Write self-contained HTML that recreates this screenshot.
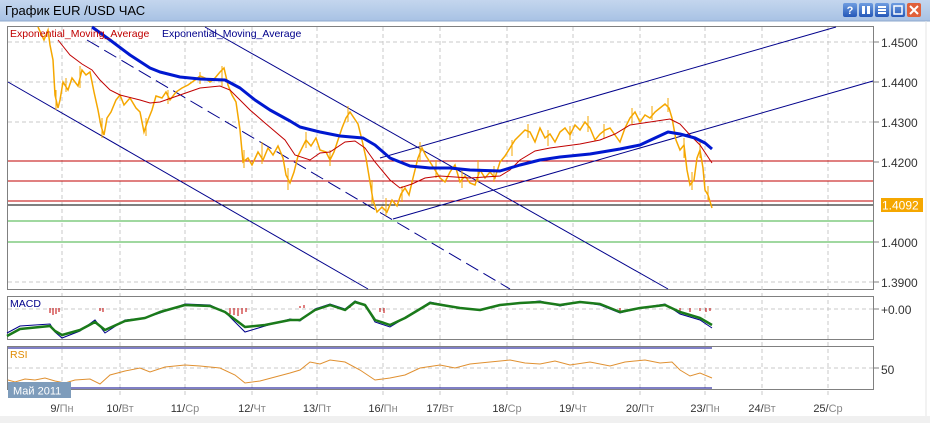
<!DOCTYPE html>
<html><head><meta charset="utf-8"><style>
html,body{margin:0;padding:0;width:930px;height:423px;overflow:hidden;background:#fff;font-family:"Liberation Sans",sans-serif}
</style></head><body>
<svg width="930" height="423" xmlns="http://www.w3.org/2000/svg" font-family="Liberation Sans, sans-serif">
<defs><linearGradient id="tb" x1="0" y1="0" x2="0" y2="1"><stop offset="0" stop-color="#c4d6ee"/><stop offset="1" stop-color="#a8c2e4"/></linearGradient>
<linearGradient id="bt" x1="0" y1="0" x2="0" y2="1"><stop offset="0" stop-color="#6f9de0"/><stop offset="1" stop-color="#2558b8"/></linearGradient></defs>
<rect x="0" y="0" width="930" height="423" fill="#fff"/>
<rect x="0" y="0" width="930" height="21" fill="url(#tb)"/>
<line x1="0" y1="21" x2="930" y2="21" stroke="#8ea8cc"/>
<text x="5" y="15" font-size="13" fill="#000">График EUR /USD  ЧАС</text>
<g>
<rect x="843" y="3" width="14" height="14" rx="2" fill="url(#bt)"/><text x="850" y="14" font-size="11" font-weight="bold" fill="#fff" text-anchor="middle">?</text>
<rect x="859" y="3" width="14" height="14" rx="2" fill="url(#bt)"/><rect x="862" y="6" width="3" height="8" fill="#fff"/><rect x="867" y="6" width="3" height="8" fill="#fff"/>
<rect x="875" y="3" width="14" height="14" rx="2" fill="url(#bt)"/><rect x="878" y="6" width="8" height="2" fill="#fff"/><rect x="878" y="9" width="8" height="2" fill="#fff"/><rect x="878" y="12" width="8" height="2" fill="#fff"/>
<rect x="891" y="3" width="14" height="14" rx="2" fill="url(#bt)"/><rect x="894" y="6" width="8" height="8" fill="none" stroke="#fff" stroke-width="1.5"/>
<rect x="907" y="3" width="14" height="14" rx="2" fill="#e0603a"/><path d="M910 6L918 14M918 6L910 14" stroke="#fff" stroke-width="2"/>
</g>
<line x1="926" y1="21" x2="926" y2="423" stroke="#e4e4e4"/>
<rect x="0" y="416" width="930" height="7" fill="#f0f0f0"/>

<rect x="7.5" y="26.5" width="866" height="263" fill="#fff" stroke="#808080"/>
<g stroke="#c8c8c8" stroke-dasharray="4,3">
<line x1="8" y1="42" x2="873" y2="42"/><line x1="8" y1="82" x2="873" y2="82"/><line x1="8" y1="122" x2="873" y2="122"/><line x1="8" y1="282" x2="873" y2="282"/>
<line x1="62" y1="27" x2="62" y2="395"/><line x1="120" y1="27" x2="120" y2="395"/><line x1="185" y1="27" x2="185" y2="395"/><line x1="252" y1="27" x2="252" y2="395"/><line x1="317" y1="27" x2="317" y2="395"/><line x1="383" y1="27" x2="383" y2="395"/><line x1="440" y1="27" x2="440" y2="395"/><line x1="507" y1="27" x2="507" y2="395"/><line x1="573" y1="27" x2="573" y2="395"/><line x1="640" y1="27" x2="640" y2="395"/><line x1="705" y1="27" x2="705" y2="395"/><line x1="762" y1="27" x2="762" y2="395"/><line x1="828" y1="27" x2="828" y2="395"/>
</g>
<line x1="8" y1="161" x2="873" y2="161" stroke="#c00000"/>
<line x1="8" y1="181" x2="873" y2="181" stroke="#c00000"/>
<line x1="8" y1="201" x2="873" y2="201" stroke="#c00000"/>
<line x1="8" y1="205" x2="873" y2="205" stroke="#000"/>
<line x1="8" y1="221" x2="873" y2="221" stroke="#40b040"/>
<line x1="8" y1="242" x2="873" y2="242" stroke="#40b040"/>
<g stroke="#00008b" stroke-width="1" fill="none">
<line x1="8" y1="82" x2="368" y2="289"/>
<line x1="87" y1="40" x2="510" y2="289" stroke-dasharray="14,6"/>
<line x1="205" y1="27" x2="668" y2="289"/>
<line x1="380" y1="158" x2="836" y2="27"/>
<line x1="393" y1="219" x2="873" y2="81"/>
</g>
<polyline fill="none" stroke="#f5a700" stroke-width="1.5" stroke-linejoin="miter" points="38,27 44,40 48,30 50,45 53,60 55,95 58,108 60,100 63,82 68,90 72,78 78,86 82,70 86,75 90,72 94,92 98,110 101,126 104,135 107,118 111,112 116,100 120,95 124,105 130,98 136,108 140,112 144,132 148,120 152,110 156,96 162,98 166,92 170,100 176,92 182,88 188,85 195,80 200,76 205,78 210,82 215,78 220,72 224,68 228,85 232,95 236,102 240,130 243,162 248,158 252,165 258,152 263,160 268,148 273,155 278,146 283,158 286,175 290,183 294,172 298,156 302,148 306,140 311,146 316,138 320,150 326,152 330,160 334,152 338,140 342,128 346,118 350,112 354,118 358,124 362,140 366,158 370,182 373,200 377,212 382,207 387,212 392,200 397,206 401,194 405,188 409,195 413,178 418,158 422,148 426,156 430,162 435,170 440,178 445,182 450,172 455,165 460,182 465,176 470,183 475,185 480,170 485,178 490,172 495,178 500,162 505,156 510,148 515,140 520,135 525,130 530,132 535,142 540,128 545,138 550,134 555,142 560,132 565,128 570,135 575,125 580,130 585,122 590,128 595,140 600,134 605,130 610,128 615,135 620,142 625,128 630,118 635,112 640,122 645,115 650,118 655,112 660,108 665,104 669,108 672,118 676,140 680,150 684,145 687,170 690,185 694,180 697,158 700,150 703,168 705,190 708,195 712,208"/>
<path stroke="#f5a700" stroke-width="1" d="M56 90v20M66 78v14M80 66v22M102 118v20M146 118v18M168 90v14M200 72v12M222 66v20M244 150v18M262 142v22M288 168v22M306 132v16M330 150v16M348 106v16M372 180v24M386 198v18M402 186v16M420 142v20M436 160v18M462 168v20M478 160v22M494 166v16M512 140v16M528 124v14M548 130v16M570 126v14M588 116v16M604 124v14M632 108v16M652 106v14M668 98v14M684 138v20M692 172v18M700 142v16M708 186v14"/>
<polyline fill="none" stroke="#c00000" stroke-width="1" points="58,40 70,55 82,64 92,70 100,80 110,90 120,95 140,100 150,103 160,102 180,95 200,88 220,86 230,90 240,100 250,110 265,123 285,140 295,155 310,160 320,153 330,152 345,142 355,141 365,148 375,162 390,180 400,188 412,184 425,178 440,176 470,178 500,176 510,170 520,160 535,151 550,148 580,144 600,140 615,134 630,125 650,122 670,119 680,124 690,135 700,145 712,163"/>
<polyline fill="none" stroke="#0018d0" stroke-width="3" stroke-linejoin="round" points="92,27 110,40 130,55 150,68 160,72 180,77 200,79 225,80 240,88 255,100 270,110 290,121 300,127 320,132 340,136 363,138 375,145 390,158 410,166 430,168 450,168 470,170 500,171 520,165 540,160 560,157 590,154 620,149 640,145 655,138 668,132 680,134 695,138 705,143 712,149"/>
<text x="10" y="37" font-size="10.5" fill="#c00000">Exponential_Moving_Average</text>
<text x="162" y="37" font-size="10.5" fill="#00008b">Exponential_Moving_Average</text>
<g font-size="12" fill="#333">
<line x1="874" y1="42" x2="879" y2="42" stroke="#808080"/><text x="881" y="47">1.4500</text>
<line x1="874" y1="82" x2="879" y2="82" stroke="#808080"/><text x="881" y="87">1.4400</text>
<line x1="874" y1="122" x2="879" y2="122" stroke="#808080"/><text x="881" y="127">1.4300</text>
<line x1="874" y1="162" x2="879" y2="162" stroke="#808080"/><text x="881" y="167">1.4200</text>
<line x1="874" y1="242" x2="879" y2="242" stroke="#808080"/><text x="881" y="247">1.4000</text>
<line x1="874" y1="282" x2="879" y2="282" stroke="#808080"/><text x="881" y="287">1.3900</text>
</g>
<rect x="881" y="198" width="42" height="14" fill="#f5a700"/>
<text x="882" y="209.5" font-size="12" fill="#fff">1.4092</text>

<rect x="7.5" y="296.5" width="866" height="43" fill="none" stroke="#808080"/>
<line x1="8" y1="309" x2="873" y2="309" stroke="#c8c8c8" stroke-dasharray="4,3"/>
<line x1="874" y1="309" x2="879" y2="309" stroke="#808080"/>
<text x="881" y="314" font-size="12" fill="#333">+0.00</text>
<text x="10" y="307" font-size="10.5" fill="#00008b">MACD</text>
<path d="M50 308v5M53 308v7M56 308v6M59 308v4M100 308v3M103 308v4M230 308v6M234 308v7M238 308v8M242 308v6M246 308v4M300 306v2M304 305v3M350 305v3M380 308v4M384 308v5M620 308v3M680 308v3M690 308v4M700 308v3M706 308v4M710 308v3" stroke="#c00000" stroke-width="1"/>
<polyline fill="none" stroke="#00008b" stroke-width="1" points="7,333 20,326 50,324 55,332 62,338 80,331 95,320 105,333 125,320 145,318 160,313 185,304 210,305 225,312 245,332 265,326 290,319 300,321 315,309 330,304 345,309 355,301 365,305 375,322 390,327 405,318 430,302 460,308 480,310 500,305 520,303 540,301 560,306 580,302 600,305 620,313 640,308 665,304 680,314 700,320 712,328"/>
<polyline fill="none" stroke="#1a7a1a" stroke-width="2.5" stroke-linejoin="round" points="7,336 20,329 50,326 55,331 62,335 80,330 95,322 105,330 125,321 145,318 160,312 185,305 210,306 225,312 245,327 265,325 290,320 300,320 315,310 330,305 345,310 355,302 365,305 375,320 390,325 405,318 430,303 460,308 480,310 500,305 520,303 540,302 560,305 580,302 600,304 620,312 640,308 665,305 680,312 700,318 712,325"/>

<rect x="7.5" y="346.5" width="866" height="43" fill="none" stroke="#808080"/>
<line x1="8" y1="368" x2="873" y2="368" stroke="#c8c8c8" stroke-dasharray="4,3"/>
<line x1="874" y1="368" x2="879" y2="368" stroke="#808080"/>
<text x="881" y="374" font-size="12" fill="#333">50</text>
<line x1="8" y1="348" x2="712" y2="348" stroke="#00008b"/>
<line x1="8" y1="388" x2="712" y2="388" stroke="#00008b"/>
<text x="10" y="358" font-size="10.5" fill="#e08a00">RSI</text>
<polyline fill="none" stroke="#e09030" stroke-width="1" points="8,380 15,382 25,379 35,380 45,378 55,381 65,383 75,380 90,379 100,384 110,375 125,371 140,368 150,372 165,367 185,365 200,366 220,368 235,375 245,383 260,381 275,377 290,373 300,370 310,362 320,364 330,360 345,362 360,370 375,380 390,378 405,375 420,368 440,365 455,368 470,364 490,362 510,360 525,363 540,364 555,361 570,365 590,362 610,366 625,362 645,360 660,363 672,362 680,370 690,376 700,373 712,378"/>
<rect x="8" y="382" width="63" height="16" fill="#7e9cbb"/>
<text x="13" y="394.5" font-size="11" fill="#fff">Май 2011</text>

<g font-size="11">
<text x="62" y="412" text-anchor="middle"><tspan fill="#333">9/</tspan><tspan fill="#888">Пн</tspan></text>
<text x="120" y="412" text-anchor="middle"><tspan fill="#333">10/</tspan><tspan fill="#888">Вт</tspan></text>
<text x="185" y="412" text-anchor="middle"><tspan fill="#333">11/</tspan><tspan fill="#888">Ср</tspan></text>
<text x="252" y="412" text-anchor="middle"><tspan fill="#333">12/</tspan><tspan fill="#888">Чт</tspan></text>
<text x="317" y="412" text-anchor="middle"><tspan fill="#333">13/</tspan><tspan fill="#888">Пт</tspan></text>
<text x="383" y="412" text-anchor="middle"><tspan fill="#333">16/</tspan><tspan fill="#888">Пн</tspan></text>
<text x="440" y="412" text-anchor="middle"><tspan fill="#333">17/</tspan><tspan fill="#888">Вт</tspan></text>
<text x="507" y="412" text-anchor="middle"><tspan fill="#333">18/</tspan><tspan fill="#888">Ср</tspan></text>
<text x="573" y="412" text-anchor="middle"><tspan fill="#333">19/</tspan><tspan fill="#888">Чт</tspan></text>
<text x="640" y="412" text-anchor="middle"><tspan fill="#333">20/</tspan><tspan fill="#888">Пт</tspan></text>
<text x="705" y="412" text-anchor="middle"><tspan fill="#333">23/</tspan><tspan fill="#888">Пн</tspan></text>
<text x="762" y="412" text-anchor="middle"><tspan fill="#333">24/</tspan><tspan fill="#888">Вт</tspan></text>
<text x="828" y="412" text-anchor="middle"><tspan fill="#333">25/</tspan><tspan fill="#888">Ср</tspan></text>
</g>
</svg>
</body></html>
